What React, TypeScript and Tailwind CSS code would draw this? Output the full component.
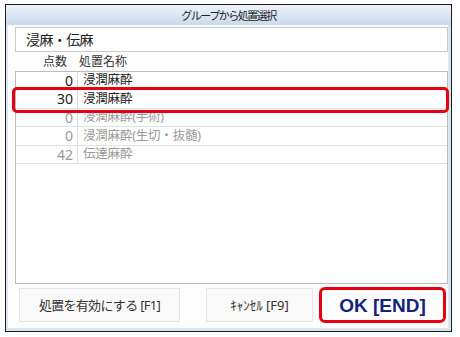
import React from "react";

const rows = [
  { n: "0", name: "浸潤麻酔", dim: false, h: "h-[18px]" },
  { n: "30", name: "浸潤麻酔", dim: false, h: "h-[19px]" },
  { n: "0", name: "浸潤麻酔(手術)", dim: true, h: "h-[18px]" },
  { n: "0", name: "浸潤麻酔(生切・抜髄)", dim: true, h: "h-[19px]" },
  { n: "42", name: "伝達麻酔", dim: true, h: "h-[18px]" },
];

const F = "font-['Noto_Sans','Noto_Sans_CJK_JP',sans-serif]";

export default function App() {
  return (
    <div className={`relative w-[460px] h-[337px] bg-white pt-[4px] pl-[5px] ${F}`}>
      <div className="w-[447px] h-[328px] border border-[#1c1c1c] flex flex-col">
        <div className="h-[20px] bg-gradient-to-b from-[#eef2f7] to-[#c9daed] flex items-center justify-center text-[11px] tracking-[-1.5px] text-[#222] leading-none">
          グループから処置選択
        </div>
        <div className="flex-1 flex flex-col bg-[#fdfdfe] border-l-[2px] border-r-[3px] border-b-[3px] border-[#dbe5f0] pl-[7px]">
          <div className="mt-[2px] h-[25px] border border-[#c8c8c8] bg-white flex items-center pl-[10px] text-[14px] tracking-[-0.6px] text-[#222] leading-none">
            浸麻・伝麻
          </div>
          <div className="h-[19px] flex items-center text-[12px] text-[#333] leading-none">
            <div className="w-[52px] text-right">点数</div>
            <div className="pl-[12px]">処置名称</div>
          </div>
          <div className="h-[213px] border border-[#bcbcbc] bg-white">
            {rows.map((r, i) => (
              <div key={i} className={`${r.h} flex border-b border-[#e2e2e2] leading-none ${r.dim ? "text-[#9a9a9a]" : "text-[#222]"}`}>
                <div className="w-[62px] border-r border-[#dcdcdc] flex items-center justify-end pr-[4px] text-[14px]">{r.n}</div>
                <div className="flex items-center pl-[5px] text-[12.5px] tracking-[-0.2px]">{r.name}</div>
              </div>
            ))}
          </div>
          <div className="mt-[3px] h-[36px] flex items-center">
            <div className="ml-[4px] w-[161px] h-[34px] border border-[#e4e4e4] bg-[#f9f9f9] flex items-center justify-center text-[13px] tracking-[-0.7px] text-[#333] leading-none">
              処置を有効にする [F1]
            </div>
            <div className="ml-[26px] w-[107px] h-[34px] border border-[#e4e4e4] bg-[#f9f9f9] flex items-center justify-center text-[13px] text-[#333] leading-none">
              ｷｬﾝｾﾙ [F9]
            </div>
            <div className="ml-[6px] w-[127px] h-[36px] border-[3px] border-[#e60012] rounded-[6px] bg-white flex items-center justify-center font-['Liberation_Sans',sans-serif] font-bold text-[19px] text-[#14237a] leading-none">
              OK [END]
            </div>
          </div>
        </div>
      </div>
      <div className="absolute left-[12px] top-[87px] w-[437px] h-[26px] border-[3px] border-[#e60012] rounded-[5px]" />
    </div>
  );
}
